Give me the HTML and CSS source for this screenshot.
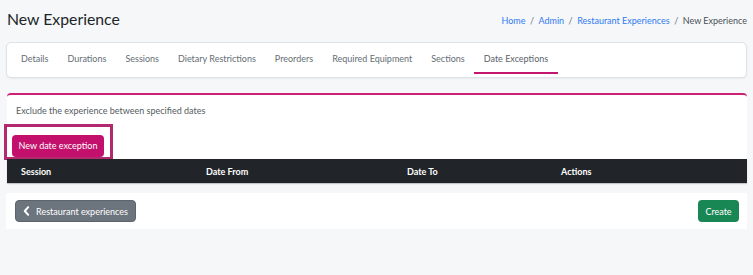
FILE: index.html
```html
<!DOCTYPE html>
<html>
<head>
<meta charset="utf-8">
<link rel="stylesheet" href="styles.css">
</head>
<body>
<div class="page">
  <div class="header">
    <h1 class="title">New Experience</h1>
    <nav class="crumbs">
      <a class="crumb-link">Home</a><span class="sep">/</span><a class="crumb-link">Admin</a><span class="sep">/</span><a class="crumb-link">Restaurant Experiences</a><span class="sep">/</span><span class="crumb-current">New Experience</span>
    </nav>
  </div>
  <div class="tabs-card">
    <div class="tab">Details</div>
    <div class="tab">Durations</div>
    <div class="tab">Sessions</div>
    <div class="tab">Dietary Restrictions</div>
    <div class="tab">Preorders</div>
    <div class="tab">Required Equipment</div>
    <div class="tab">Sections</div>
    <div class="tab active">Date Exceptions</div>
  </div>
  <div class="main-card">
    <p class="desc">Exclude the experience between specified dates</p>
    <div class="highlight">
      <button class="btn btn-primary">New date exception</button>
    </div>
    <div class="table-head">
      <div class="th">Session</div>
      <div class="th">Date From</div>
      <div class="th">Date To</div>
      <div class="th">Actions</div>
    </div>
  </div>
  <div class="footer-card">
    <button class="btn btn-secondary"><svg class="chev" width="7" height="10" viewBox="0 0 7 10"><path d="M5.2 1.2 L1.8 5 L5.2 8.8" fill="none" stroke="#fff" stroke-width="2" stroke-linecap="round" stroke-linejoin="round"/></svg>Restaurant experiences</button>
    <button class="btn btn-success">Create</button>
  </div>
</div>
</body>
</html>
```
FILE: styles.css
```css
* { box-sizing: border-box; }
html, body { margin: 0; padding: 0; }
body {
  background: #f6f7f9;
  font-family: "Lato", "Noto Sans", sans-serif;
  color: #212529;
  width: 753px;
  height: 275px;
  overflow: hidden;
}
.page {
  padding: 0 6px 0 6px;
}
.header {
  display: flex;
  justify-content: space-between;
  align-items: center;
  height: 40px;
  padding-left: 1px;
}
.title {
  margin: 0;
  font-size: 15.8px;
  font-weight: 400;
  color: #212529;
  line-height: 1;
  position: relative;
  top: -1px;
}
.crumbs {
  font-size: 9px;
  color: #6c757d;
  display: flex;
  align-items: center;
  white-space: nowrap;
}
.crumb-link { color: #2f7bf0; }
.sep { margin: 0 4.5px; color: #6c757d; }
.crumb-current { color: #495057; }
.tabs-card {
  margin-top: 2px;
  height: 36px;
  background: #fff;
  border: 1px solid #dfe2e6;
  border-radius: 5px;
  box-shadow: 0 1px 2px rgba(0,0,0,0.06);
  display: flex;
  align-items: stretch;
  padding-left: 4.5px;
}
.tab {
  font-size: 9px;
  color: #656d75;
  padding: 1px 9.5px 0 9.5px;
  display: flex;
  align-items: center;
  border-bottom: 2px solid transparent;
  height: 31px;
  white-space: nowrap;
}
.tab.active {
  border-bottom-color: #c4166c;
  color: #5a6268;
}
.main-card {
  margin-top: 15px;
  margin-left: 1px;
  background: #fff;
  border-top: 2px solid #cc1f75;
  border-radius: 4px 4px 0 0;
}
.desc {
  margin: 0;
  padding: 10px 0 0 9px;
  font-size: 9px;
  color: #555b61;
  height: 29px;
}
.highlight {
  margin-left: -3px;
  width: 109px;
  height: 36px;
  border: 3px solid #b3296f;
  padding: 6px 0 0 5px;
}
.btn {
  border: none;
  font-family: "Lato", "Noto Sans", sans-serif;
  font-size: 9px;
  color: #fff;
  border-radius: 4px;
  height: 22px;
  display: inline-flex;
  align-items: center;
  justify-content: center;
  padding: 0;
  white-space: nowrap;
}
.btn-primary {
  background: #c2106c;
  width: 92px;
}
.table-head {
  margin-top: -1px;
  height: 24px;
  background: #212529;
  display: grid;
  grid-template-columns: 185px 201px 154px 1fr;
  align-items: center;
  font-size: 9px;
  font-weight: 700;
  color: #fff;
  box-shadow: 0 1px 1px rgba(0,0,0,0.2);
}
.th { padding-left: 14px; }
.footer-card {
  margin-top: 10px;
  height: 36px;
  background: #fff;
  display: flex;
  justify-content: space-between;
  align-items: center;
  padding: 0 8px 0 9px;
}
.btn-secondary {
  background: #6c757d;
  width: 121px;
  gap: 6px;
  border: 1px solid #5c636a;
}
.chev { display: block; }
.btn-success {
  background: #198754;
  width: 41px;
}
```
